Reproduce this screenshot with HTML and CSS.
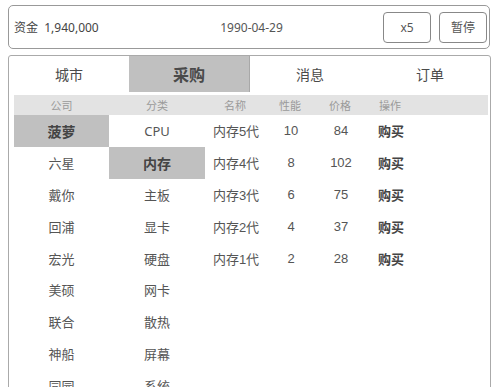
FILE: index.html
```html
<!DOCTYPE html>
<html lang="zh">
<head>
<meta charset="utf-8">
<link rel="stylesheet" href="styles.css">
</head>
<body>
<div class="topbar">
  <div class="funds">资金&nbsp;&nbsp;1,940,000</div>
  <div class="date">1990-04-29</div>
  <div class="actions">
    <button class="btn">x5</button>
    <button class="btn">暂停</button>
  </div>
</div>
<div class="panel">
  <div class="tabs">
    <div class="tab">城市</div>
    <div class="tab active">采购</div>
    <div class="tab">消息</div>
    <div class="tab">订单</div>
  </div>
  <div class="content">
    <div class="thead">
      <div>公司</div><div>分类</div><div>名称</div><div>性能</div><div>价格</div><div>操作</div><div></div>
    </div>
    <div class="tbody">
      <div class="list company">
        <div class="cell sel">菠萝</div>
        <div class="cell">六星</div>
        <div class="cell">戴你</div>
        <div class="cell">回浦</div>
        <div class="cell">宏光</div>
        <div class="cell">美硕</div>
        <div class="cell">联合</div>
        <div class="cell">神船</div>
        <div class="cell">同园</div>
      </div>
      <div class="list category">
        <div class="cell">CPU</div>
        <div class="cell sel">内存</div>
        <div class="cell">主板</div>
        <div class="cell">显卡</div>
        <div class="cell">硬盘</div>
        <div class="cell">网卡</div>
        <div class="cell">散热</div>
        <div class="cell">屏幕</div>
        <div class="cell">系统</div>
      </div>
      <div class="products">
        <div class="cell">内存5代</div><div class="cell">10</div><div class="cell">84</div><div class="cell buy">购买</div>
        <div class="cell">内存4代</div><div class="cell">8</div><div class="cell">102</div><div class="cell buy">购买</div>
        <div class="cell">内存3代</div><div class="cell">6</div><div class="cell">75</div><div class="cell buy">购买</div>
        <div class="cell">内存2代</div><div class="cell">4</div><div class="cell">37</div><div class="cell buy">购买</div>
        <div class="cell">内存1代</div><div class="cell">2</div><div class="cell">28</div><div class="cell buy">购买</div>
      </div>
    </div>
  </div>
</div>
</body>
</html>
```
FILE: styles.css
```css
html, body {
  margin: 0;
  background: #fff;
}
body {
  padding: 5px 7px 0 8px;
  height: 387px;
  box-sizing: border-box;
  overflow: hidden;
  font-family: "Noto Sans", "Noto Sans CJK SC", sans-serif;
  color: #555;
}
.topbar {
  height: 44px;
  box-sizing: border-box;
  border: 1px solid #999;
  border-radius: 5px;
  display: grid;
  grid-template-columns: 1fr auto 1fr;
  align-items: center;
  padding: 0 2px 0 5px;
  font-size: 12px;
  color: #444;
}
.date {
  color: #555;
  padding-left: 2px;
}
.actions {
  display: flex;
  justify-content: flex-end;
  gap: 8px;
}
.btn {
  width: 48px;
  height: 31px;
  border: 1px solid #888;
  border-radius: 4px;
  background: #fff;
  font-family: "Noto Sans", "Noto Sans CJK SC", sans-serif;
  font-size: 12px;
  color: #555;
  padding: 0;
}
.panel {
  margin-top: 6px;
  margin-right: -1px;
  height: 400px;
  border: 1px solid #aaa;
  border-radius: 3px;
}
.tabs {
  display: flex;
  height: 36px;
}
.tab {
  flex: 1;
  display: flex;
  align-items: center;
  justify-content: center;
  font-size: 14px;
  color: #4a4a4a;
}
.tab.active {
  background: #c0c0c0;
  border-right: 1px solid #a8a8a8;
  font-size: 16px;
  font-weight: bold;
}
.content {
  padding: 3px 2px 0 5px;
}
.thead {
  display: grid;
  grid-template-columns: 95px 96px 60px 50px 50px 50px 1fr;
  height: 20px;
  align-items: center;
  background: #e3e3e3;
  font-size: 11px;
  color: #9a9a9a;
  text-align: center;
}
.tbody {
  display: flex;
  align-items: flex-start;
}
.cell {
  height: 31.8px;
  display: flex;
  align-items: center;
  justify-content: center;
  font-size: 13px;
  color: #555;
}
.company {
  width: 95px;
}
.category {
  width: 96px;
}
.sel {
  background: #c0c0c0;
  font-size: 14px;
  font-weight: bold;
  color: #444;
}
.products {
  display: grid;
  grid-template-columns: 60px 50px 50px 50px;
  padding-left: 1px;
}
.products .cell {
  font-family: "Liberation Sans", "Noto Sans CJK SC", sans-serif;
}
.products .buy {
  font-weight: bold;
  color: #444;
}
```
